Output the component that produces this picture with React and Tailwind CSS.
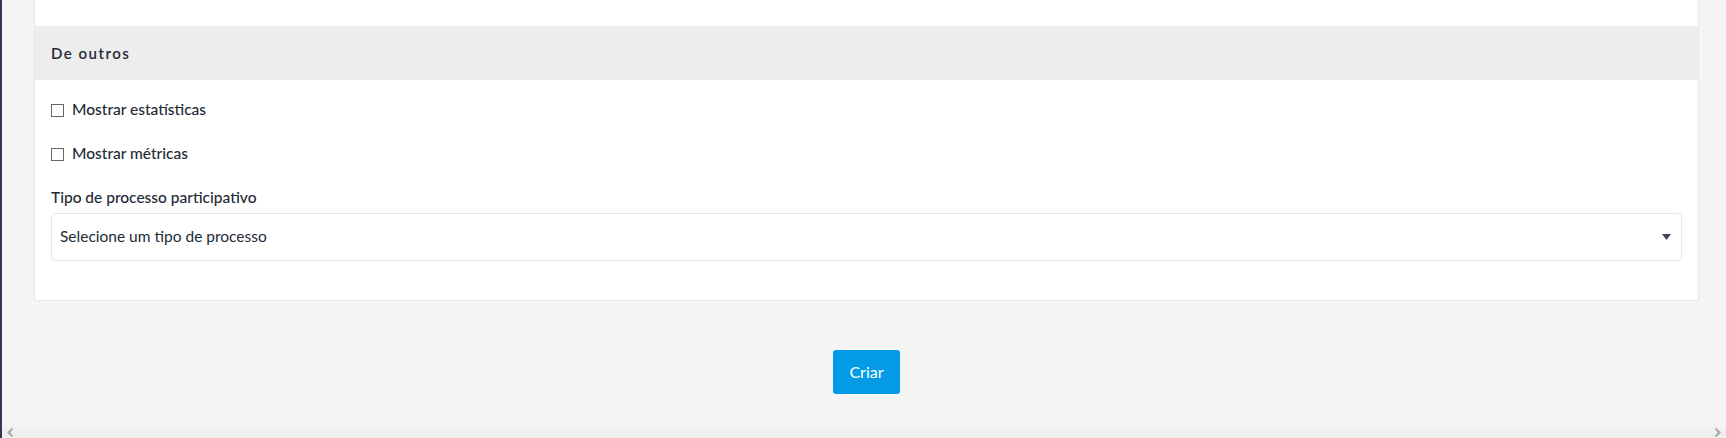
export default function App() {
  const font = { fontFamily: "Lato, 'Noto Sans', sans-serif" };
  return (
    <div className="w-[1726px] h-[438px] flex flex-col bg-[#f4f4f4] border-l-2 border-[#2f3a4f] overflow-hidden" style={font}>
      <div className="flex-1 flex flex-col pl-[32px] pr-[27px]">
        <div className="bg-white border-x border-b border-[#e8e8e8] rounded-b-[3px] flex flex-col">
          <div className="h-[26px]" />
          <div className="h-[54px] bg-[#ededed] flex items-center px-4">
            <span className="text-[15px] font-semibold tracking-[1.5px] text-[#232b36]">De outros</span>
          </div>
          <div className="flex flex-col px-4 pt-5 pb-[39px] text-[#232b36]">
            <label className="flex items-center gap-[8px] h-5">
              <span className="w-[13px] h-[13px] border border-[#666] bg-white" />
              <span className="text-[15.5px] font-medium">Mostrar estatísticas</span>
            </label>
            <label className="flex items-center gap-[8px] h-5 mt-6">
              <span className="w-[13px] h-[13px] border border-[#666] bg-white" />
              <span className="text-[15.5px] font-medium">Mostrar métricas</span>
            </label>
            <div className="h-5 mt-6 flex items-center text-[15.5px] font-medium">Tipo de processo participativo</div>
            <div className="mt-[5px] h-[48px] border border-[#e8e8e8] rounded-[4px] flex items-center justify-between pl-[8px] pr-[10px]">
              <span className="text-[15.5px] text-[#232b36]">Selecione um tipo de processo</span>
              <svg width="9" height="7" viewBox="0 0 9 7" className="mt-[1px]">
                <path d="M0 0 H9 L4.5 6 Z" fill="#3d4556" />
              </svg>
            </div>
          </div>
        </div>
        <div className="flex justify-center mt-[49px]">
          <button className="w-[67px] h-[44px] rounded-[3px] bg-[#039be5] text-white text-[16px]">Criar</button>
        </div>
      </div>
      <div className="h-[11px] bg-[#efefef] flex items-center justify-between px-[5px]">
        <svg width="7" height="9" viewBox="0 0 7 9"><path d="M5.5 0.5 L1.5 4.5 L5.5 8.5" stroke="#a8a8a8" strokeWidth="2" fill="none" /></svg>
        <svg width="7" height="9" viewBox="0 0 7 9"><path d="M1.5 0.5 L5.5 4.5 L1.5 8.5" stroke="#a8a8a8" strokeWidth="2" fill="none" /></svg>
      </div>
    </div>
  );
}
